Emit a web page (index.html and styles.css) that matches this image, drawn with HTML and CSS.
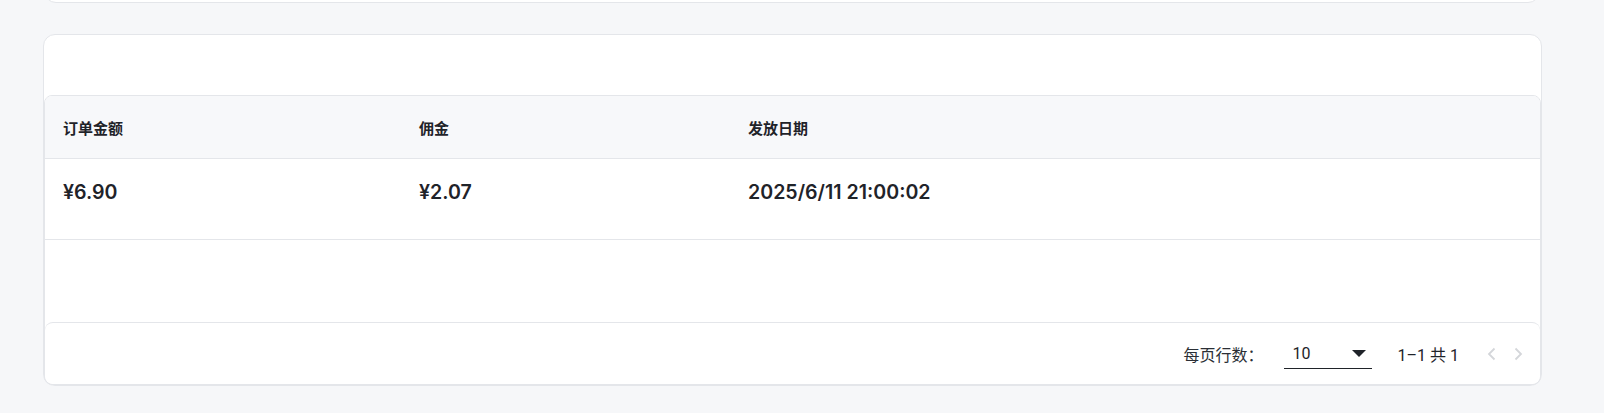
FILE: index.html
```html
<!DOCTYPE html>
<html lang="zh">
<head>
<meta charset="utf-8">
<title>佣金记录</title>
<link rel="stylesheet" href="styles.css">
</head>
<body>
<div class="page">
  <div class="card prev-card"></div>
  <div class="card main-card">
    <div class="card-top"></div>
    <div class="paper">
      <div class="row head">
        <div class="cell c1">订单金额</div>
        <div class="cell c2">佣金</div>
        <div class="cell c3">发放日期</div>
      </div>
      <div class="row body">
        <div class="cell c1">¥6.90</div>
        <div class="cell c2">¥2.07</div>
        <div class="cell c3">2025/6/11 21:00:02</div>
      </div>
      <div class="spacer"></div>
      <div class="footer">
        <span class="label">每页行数<span class="colon">：</span></span>
        <div class="select">
          <span>10</span>
          <svg class="caret" width="14" height="7" viewBox="0 0 14 7"><path d="M0 0h14L7 7z" fill="#1f2329"/></svg>
        </div>
        <span class="range">1–1 共 1</span>
        <div class="nav">
          <svg width="24" height="24" viewBox="0 0 24 24"><path d="M14.5 6.5 9 12l5.5 5.5" fill="none" stroke="#d4d6da" stroke-width="1.8"/></svg>
          <svg width="24" height="24" viewBox="0 0 24 24"><path d="M9.5 6.5 15 12l-5.5 5.5" fill="none" stroke="#d4d6da" stroke-width="1.8"/></svg>
        </div>
      </div>
    </div>
  </div>
</div>
</body>
</html>
```
FILE: styles.css
```css
html, body {
  margin: 0;
  padding: 0;
  background: #f6f7f9;
}
body {
  font-family: Inter, "Noto Sans CJK SC", sans-serif;
  color: #1f2329;
}
.page {
  padding: 0 62px 0 43px;
}
.card {
  background: #fff;
  border: 1px solid #e4e6ea;
  border-radius: 12px;
  box-sizing: border-box;
}
.prev-card {
  height: 40px;
  margin-top: -37px;
  margin-left: 1px;
  margin-right: 2px;
}
.main-card {
  margin-top: 31px;
  width: 1499px;
}
.card-top {
  height: 60px;
}
.paper {
  border: 1px solid #e4e6ea;
  border-radius: 8px;
  overflow: hidden;
}
.row {
  display: flex;
  border-bottom: 1px solid #e4e6ea;
}
.head {
  height: 62px;
  background: #f7f8fa;
  align-items: center;
  font-family: "Noto Sans CJK SC", sans-serif;
  font-size: 15px;
  font-weight: 700;
}
.body {
  height: 81px;
  font-size: 19.6px;
  font-weight: 600;
  padding-top: 19px;
  box-sizing: border-box;
  line-height: 28px;
}
.cell {
  padding-left: 18px;
  box-sizing: border-box;
}
.c1 { width: 356px; }
.c2 { width: 329px; }
.c3 { flex: 1; }
.spacer {
  height: 82px;
}
.footer {
  height: 62px;
  border-top: 1px solid #e4e6ea;
  border-radius: 8px;
  box-sizing: border-box;
  display: flex;
  align-items: center;
  justify-content: flex-end;
  padding-right: 10px;
  font-family: Roboto, "Noto Sans CJK SC", sans-serif;
  font-size: 16px;
  color: #1f2329;
}
.label {
  color: #2b2f36;
}
.colon {
  font-family: "Noto Sans CJK TC", sans-serif;
}
.select {
  width: 88px;
  height: 30px;
  margin-left: 20px;
  border-bottom: 1px solid #1f2329;
  box-sizing: border-box;
  display: flex;
  align-items: center;
  justify-content: space-between;
  padding: 0 6px 0 9px;
}
.caret {
  display: block;
}
.range {
  margin-left: 26px;
}
.nav {
  display: flex;
  gap: 2px;
  margin-left: 21px;
}
.nav svg {
  display: block;
}
```
